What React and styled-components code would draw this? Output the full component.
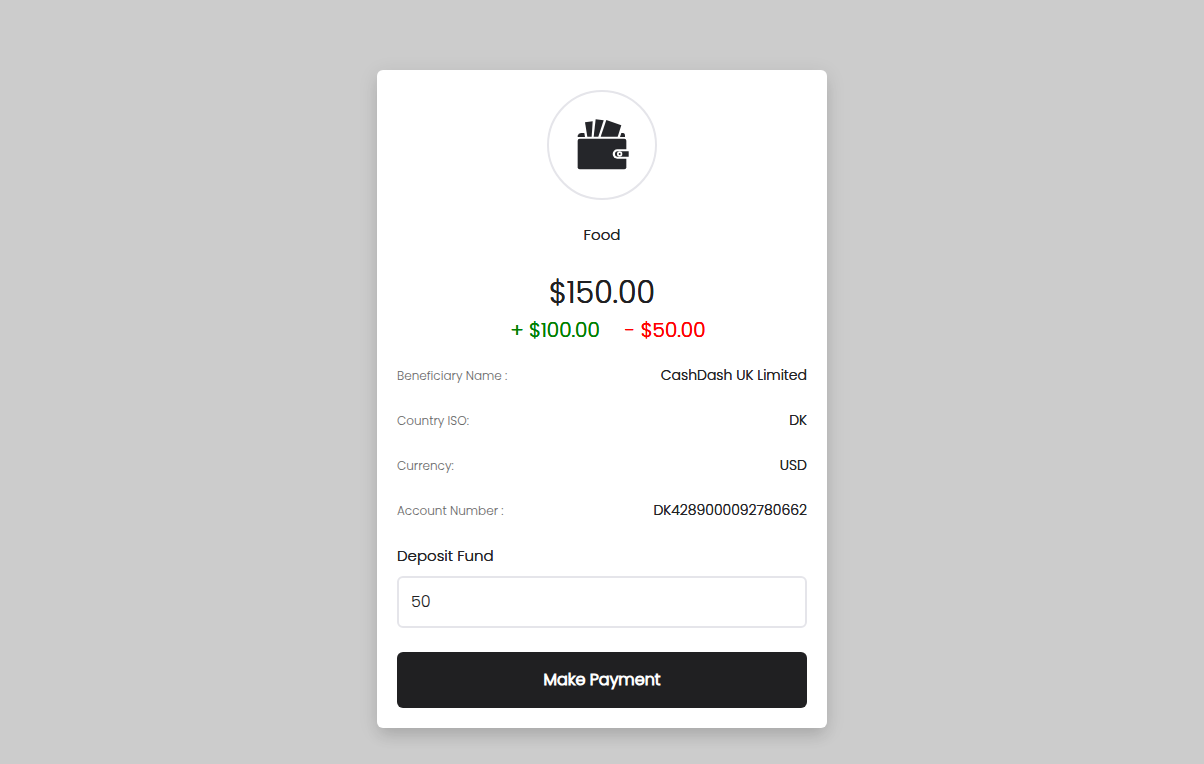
import { useState } from 'react'
import styled, { createGlobalStyle } from 'styled-components'

const GlobalStyle = createGlobalStyle`
* {
  box-sizing: border-box;
}
body {
  margin: 0;
  background-color: #ccc;
  color: #202022;
  font-family: Poppins, Inter, sans-serif;
  font-weight: 300;
}
`;
const Container = styled.main`
min-height: 100vh;
display: flex;
justify-content: center;
align-items: flex-start;
padding: 70px 20px 36px;
`;
const Card = styled.form`
width: 100%;
max-width: 450px;
display: flex;
flex-direction: column;
padding: 20px;
border-radius: 6px;
background-color: #fff;
box-shadow: 0 10px 15px -3px rgba(0, 0, 0, 0.1), 0 4px 20px rgba(0, 0, 0, 0.1);
`;
const IconCircle = styled.div`
align-self: center;
display: flex;
align-items: center;
justify-content: center;
width: 110px;
height: 110px;
border: 2px solid #e5e5ea;
border-radius: 50%;
`;
const Title = styled.h1`
margin: 23px 0;
font-size: 15px;
line-height: 24px;
font-weight: 300;
text-shadow: 0 0 currentColor;
text-align: center;
`;
const Balance = styled.div`
font-size: 30px;
line-height: 45px;
text-shadow: 0 0 currentColor, 0 0 currentColor;
text-align: center;
`;
const Changes = styled.div`
display: flex;
justify-content: center;
gap: 25px;
padding-left: 12px;
margin-bottom: 8px;
font-size: 20px;
line-height: 30px;
`;
const Change = styled.span`
color: ${({ $color }) => $color};
text-shadow: 0 0 currentColor, 0 0 currentColor;
`;
const Details = styled.dl`
margin: 0 0 11px;
`;
const Row = styled.div`
display: flex;
align-items: center;
justify-content: space-between;
height: 45px;
`;
const Term = styled.dt`
color: #666;
font-size: 12px;
`;
const Value = styled.dd`
margin: 0;
font-size: 14px;
text-shadow: 0 0 currentColor;
`;
const Label = styled.label`
margin-bottom: 8px;
font-size: 15px;
line-height: 24px;
text-shadow: 0 0 currentColor;
`;
const Input = styled.input`
width: 100%;
height: 52px;
padding: 0 12px 2px;
border: 2px solid #e5e5ea;
border-radius: 6px;
background-color: #fff;
color: #202022;
font-family: inherit;
font-size: 16px;
font-weight: 300;
outline: none;
`;
const Button = styled.button`
height: 56px;
margin-top: 24px;
padding: 0 0 2px;
border: none;
border-radius: 6px;
background-color: #202022;
color: #fff;
font-family: inherit;
font-size: 16px;
font-weight: 300;
-webkit-text-stroke: 1px currentColor;
cursor: pointer;
`;

const details = [
  { term: 'Beneficiary Name :', value: 'CashDash UK Limited' },
  { term: 'Country ISO:', value: 'DK' },
  { term: 'Currency:', value: 'USD' },
  { term: 'Account Number :', value: 'DK4289000092780662' },
]

function WalletIcon() {
  return (
    <svg width="64" height="64" viewBox="0 3 192 192" fill="#25262a" aria-hidden="true">
      {/* notes */}
      <path d="M45 31 68 28 65 74H52Z" />
      <path d="M77 22 101 25 85 74H71Z" />
      <path d="M109 24 154 40 143 74H92Z" />
      {/* back edge */}
      <path d="M23 75V71Q25 63 33 63H43L45 75Z" />
      <path d="M150 75 154 63H160Q165 64 165 70V75Z" />
      {/* body and clasp */}
      <rect x="23" y="80" width="146" height="92" rx="6" />
      <path d="M180 112H142A14 14 0 0 0 142 140H180Z" fill="#fff" />
      <path d="M176 118H143A8 8 0 0 0 143 134H176Z" />
      <circle cx="149" cy="126" r="8" fill="#fff" />
      <circle cx="149" cy="126" r="3" />
    </svg>
  )
}

function App() {
  const [amount, setAmount] = useState('50')

  const submitHandler = (event) => {
    event.preventDefault()
  }

  return (
    <Container>
      <GlobalStyle />
      <Card onSubmit={submitHandler}>
        <IconCircle>
          <WalletIcon />
        </IconCircle>
        <Title>Food</Title>
        <Balance>$150.00</Balance>
        <Changes>
          <Change $color="green">+ $100.00</Change>
          <Change $color="red">- $50.00</Change>
        </Changes>

        <Details>
          {details.map(item => (
            <Row key={item.term}>
              <Term>{item.term}</Term>
              <Value>{item.value}</Value>
            </Row>
          ))}
        </Details>

        <Label htmlFor="deposit">Deposit Fund</Label>
        <Input id="deposit" value={amount} onChange={(event) => setAmount(event.target.value)} />
        <Button type="submit">Make Payment</Button>
      </Card>
    </Container>
  )
}

export default App
